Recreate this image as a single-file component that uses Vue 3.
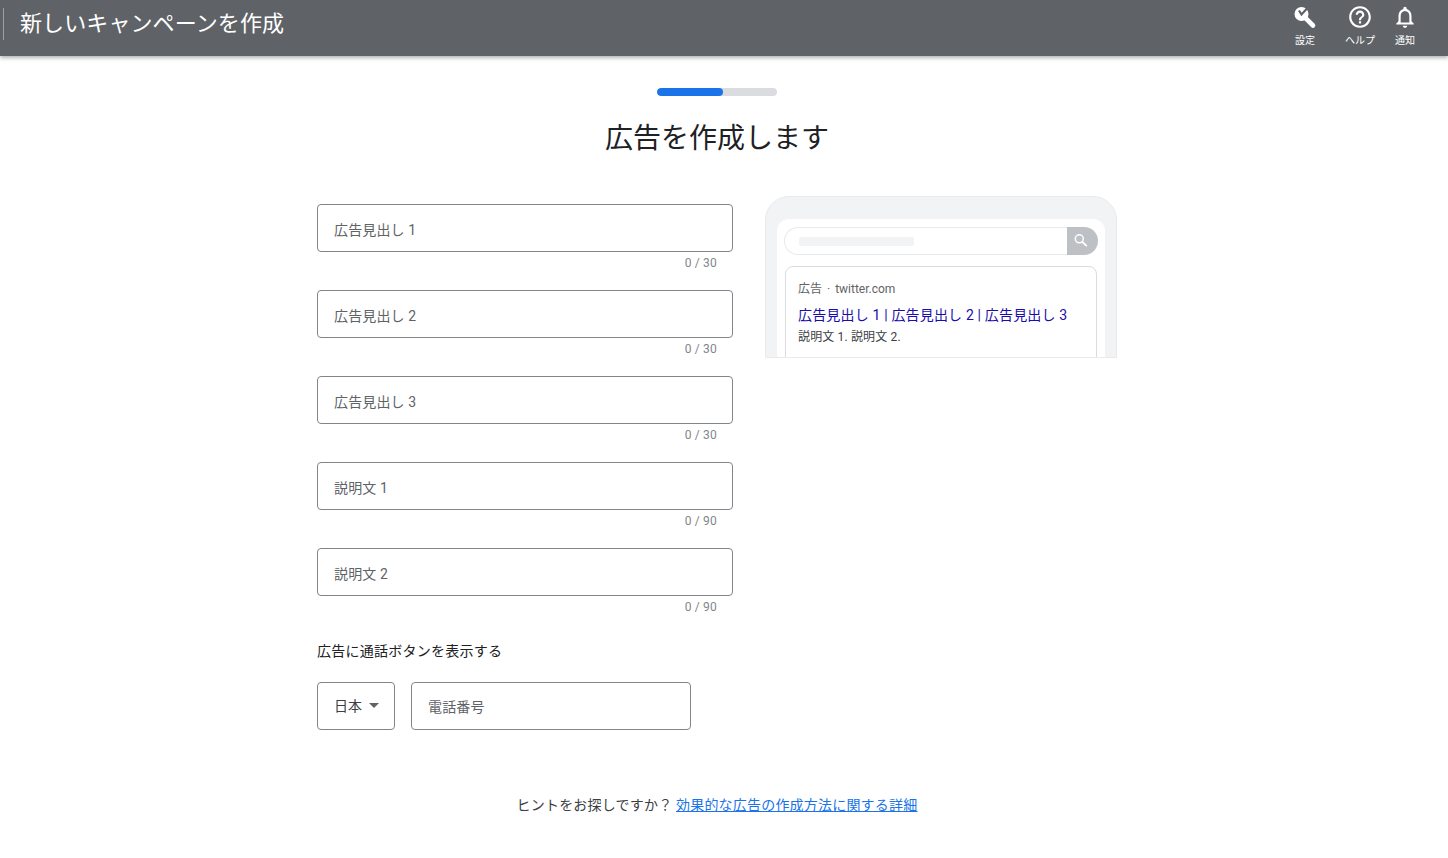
<template>
  <div class="page">
    <header class="topbar">
      <div class="topbar-left">
        <span class="divider"></span>
        <h1 class="topbar-title">新しいキャンペーンを作成</h1>
      </div>
      <nav class="topbar-actions">
        <div class="action action-tools">
          <svg width="26" height="26" viewBox="0 0 26 26" fill="none">
            <circle cx="9.5" cy="10" r="7" fill="#fff" />
            <path d="M12 12.500L21 21.500" stroke="#fff" stroke-width="4.600" stroke-linecap="round" />
            <path d="M7 6.500L9.500 10.500L15 4.500" stroke="#5f6368" stroke-width="2.200" />
          </svg>
          <span>設定</span>
        </div>
        <div class="action action-help">
          <svg width="26" height="26" viewBox="0 0 24 24" fill="#fff">
            <path d="M11 18h2v-2h-2v2zm1-16C6.48 2 2 6.48 2 12s4.48 10 10 10 10-4.48 10-10S17.52 2 12 2zm0 18c-4.41 0-8-3.59-8-8s3.59-8 8-8 8 3.59 8 8-3.59 8-8 8zm0-14c-2.21 0-4 1.79-4 4h2c0-1.1.9-2 2-2s2 .9 2 2c0 2-3 1.75-3 5h2c0-2.25 3-2.5 3-5 0-2.21-1.79-4-4-4z" />
          </svg>
          <span>ヘルプ</span>
        </div>
        <div class="action action-bell">
          <svg width="26" height="26" viewBox="0 0 24 24" fill="#fff">
            <path d="M12 22c1.1 0 2-.9 2-2h-4c0 1.1.9 2 2 2zm6-6v-5c0-3.07-1.63-5.64-4.5-6.32V4c0-.83-.67-1.5-1.5-1.5s-1.5.67-1.5 1.5v.68C7.64 5.36 6 7.92 6 11v5l-2 2v1h16v-1l-2-2zm-2 1H8v-6c0-2.48 1.51-4.5 4-4.5s4 2.02 4 4.5v6z" />
          </svg>
          <span>通知</span>
        </div>
      </nav>
    </header>

    <main class="content">
      <div class="progress"><div class="progress-fill"></div></div>
      <h2 class="heading">広告を作成します</h2>

      <div class="columns">
        <form class="form" @submit.prevent>
          <div v-for="field in fields" :key="field.label" class="field">
            <input class="text-input" type="text" :placeholder="field.label" />
            <div class="counter">0 / {{ field.max }}</div>
          </div>

          <p class="call-label">広告に通話ボタンを表示する</p>
          <div class="phone-row">
            <button class="country" type="button">
              日本<span class="caret"></span>
            </button>
            <input class="text-input phone" type="text" placeholder="電話番号" />
          </div>
        </form>

        <aside class="preview">
          <div class="phone-screen">
            <div class="searchbar">
              <div class="search-field"><span class="search-skeleton"></span></div>
              <div class="search-btn">
                <svg width="16" height="16" viewBox="0 0 16 16" fill="none" stroke="#fff" stroke-width="1.500">
                  <circle cx="6.300" cy="5.800" r="4" />
                  <path d="M9.300 8.800L13.800 13.200" stroke-width="1.800" />
                </svg>
              </div>
            </div>
            <div class="ad-card">
              <div class="ad-url">広告<span class="ad-dot">·</span>twitter.com</div>
              <div class="ad-title">広告見出し 1 | 広告見出し 2 | 広告見出し 3</div>
              <div class="ad-desc">説明文 1. 説明文 2.</div>
            </div>
          </div>
        </aside>
      </div>

      <p class="hint">
        ヒントをお探しですか？ <a href="#" class="hint-link">効果的な広告の作成方法に関する詳細</a>
      </p>
    </main>
  </div>
</template>

<script setup>
const fields = [
  { label: '広告見出し 1', max: 30 },
  { label: '広告見出し 2', max: 30 },
  { label: '広告見出し 3', max: 30 },
  { label: '説明文 1', max: 90 },
  { label: '説明文 2', max: 90 }
]
</script>

<style scoped>
.page {
  height: 858px;
  overflow: hidden;
  background: #fff;
  font-family: Roboto, 'Noto Sans CJK JP', sans-serif;
  color: #202124;
}

.topbar {
  height: 56px;
  background: #5f6368;
  box-shadow: 0 2px 4px rgba(60, 64, 67, 0.4);
  display: flex;
  justify-content: space-between;
  position: relative;
}

.topbar-left {
  display: flex;
  align-items: flex-start;
  padding: 8px 0 0 3px;
}

.divider {
  width: 1px;
  height: 32px;
  background: #9aa0a6;
}

.topbar-title {
  margin: 0 0 0 16px;
  font-size: 22px;
  font-weight: 400;
  line-height: 32px;
  letter-spacing: 0.1px;
  color: #fff;
}

.topbar-actions {
  display: flex;
  padding: 4px 30px 0 0;
}

.action {
  display: flex;
  flex-direction: column;
  align-items: center;
  gap: 4px;
  color: #fff;
  font-size: 10px;
  line-height: 14px;
}

.action-tools {
  margin-right: 27px;
}

.action-help {
  margin-right: 17px;
}

.content {
  width: 800px;
  margin-left: 317px;
  display: flex;
  flex-direction: column;
  align-items: center;
}

.progress {
  width: 120px;
  height: 8px;
  margin-top: 32px;
  border-radius: 4px;
  background: #dadce0;
  overflow: hidden;
}

.progress-fill {
  width: 66px;
  height: 100%;
  border-radius: 4px;
  background: #1a73e8;
}

.heading {
  margin: 18px 0 0;
  font-size: 28px;
  font-weight: 400;
  line-height: 50px;
  color: #202124;
}

.columns {
  width: 100%;
  display: flex;
  justify-content: space-between;
  align-items: flex-start;
  margin-top: 32px;
}

.form {
  width: 416px;
  padding-top: 8px;
}

.field {
  height: 86px;
}

.text-input {
  display: block;
  width: 100%;
  height: 48px;
  box-sizing: border-box;
  padding: 3px 16px 0;
  border: 1px solid #80868b;
  border-radius: 4px;
  outline: none;
  background: #fff;
  font-family: inherit;
  font-size: 14px;
  letter-spacing: 0.15px;
  color: #202124;
}

.text-input::placeholder {
  color: #5f6368;
  opacity: 1;
}

.counter {
  padding-right: 16px;
  margin-top: 3px;
  text-align: right;
  font-size: 12px;
  line-height: 16px;
  letter-spacing: 0.2px;
  color: #80868b;
}

.call-label {
  margin: 7px 0 0;
  font-size: 14px;
  line-height: 20px;
  letter-spacing: 0.25px;
  color: #202124;
}

.phone-row {
  display: flex;
  gap: 16px;
  margin-top: 21px;
}

.country {
  width: 78px;
  height: 48px;
  padding: 0 0 2px 16px;
  display: flex;
  align-items: center;
  border: 1px solid #80868b;
  border-radius: 4px;
  background: #fff;
  font-family: inherit;
  font-size: 14px;
  color: #3c4043;
}

.caret {
  width: 0;
  height: 0;
  margin-left: 7px;
  border-left: 5px solid transparent;
  border-right: 5px solid transparent;
  border-top: 5px solid #5f6368;
}

.phone {
  width: 280px;
  padding-top: 2px;
}

.preview {
  width: 352px;
  height: 162px;
  box-sizing: border-box;
  padding: 22px 11px 0;
  background: #f1f3f4;
  border: 1px solid #e8eaed;
  border-radius: 24px 24px 0 0;
  overflow: hidden;
}

.phone-screen {
  height: 100%;
  box-sizing: border-box;
  padding: 8px 7px 0;
  background: #fff;
  border-radius: 12px 12px 0 0;
}

.searchbar {
  display: flex;
  height: 28px;
}

.search-field {
  flex: 1;
  box-sizing: border-box;
  padding: 9px 14px;
  border: 1px solid #e8eaed;
  border-right: none;
  border-radius: 14px 0 0 14px;
}

.search-skeleton {
  display: block;
  width: 115px;
  height: 9px;
  border-radius: 2px;
  background: #f1f3f4;
}

.search-btn {
  width: 31px;
  display: flex;
  align-items: center;
  justify-content: center;
  padding-right: 3px;
  box-sizing: border-box;
  background: #bdc1c6;
  border-radius: 0 14px 14px 0;
}

.ad-card {
  height: 110px;
  box-sizing: border-box;
  margin: 11px 1px 0 1px;
  padding: 13px 12px 0;
  border: 1px solid #dadce0;
  border-radius: 8px;
}

.ad-url {
  font-size: 12px;
  line-height: 18px;
  color: #5f6368;
}

.ad-dot {
  margin: 0 5px;
}

.ad-title {
  margin-top: 7px;
  font-size: 14px;
  line-height: 20px;
  letter-spacing: 0.17px;
  color: #1a0dab;
  white-space: nowrap;
}

.ad-desc {
  margin-top: 4px;
  font-size: 12px;
  line-height: 16px;
  letter-spacing: 0.15px;
  color: #3c4043;
}

.hint {
  margin: 65px 0 0;
  font-size: 14px;
  line-height: 20px;
  letter-spacing: 0.2px;
  color: #3c4043;
}

.hint-link {
  color: #1a73e8;
  text-decoration: underline;
}
</style>
